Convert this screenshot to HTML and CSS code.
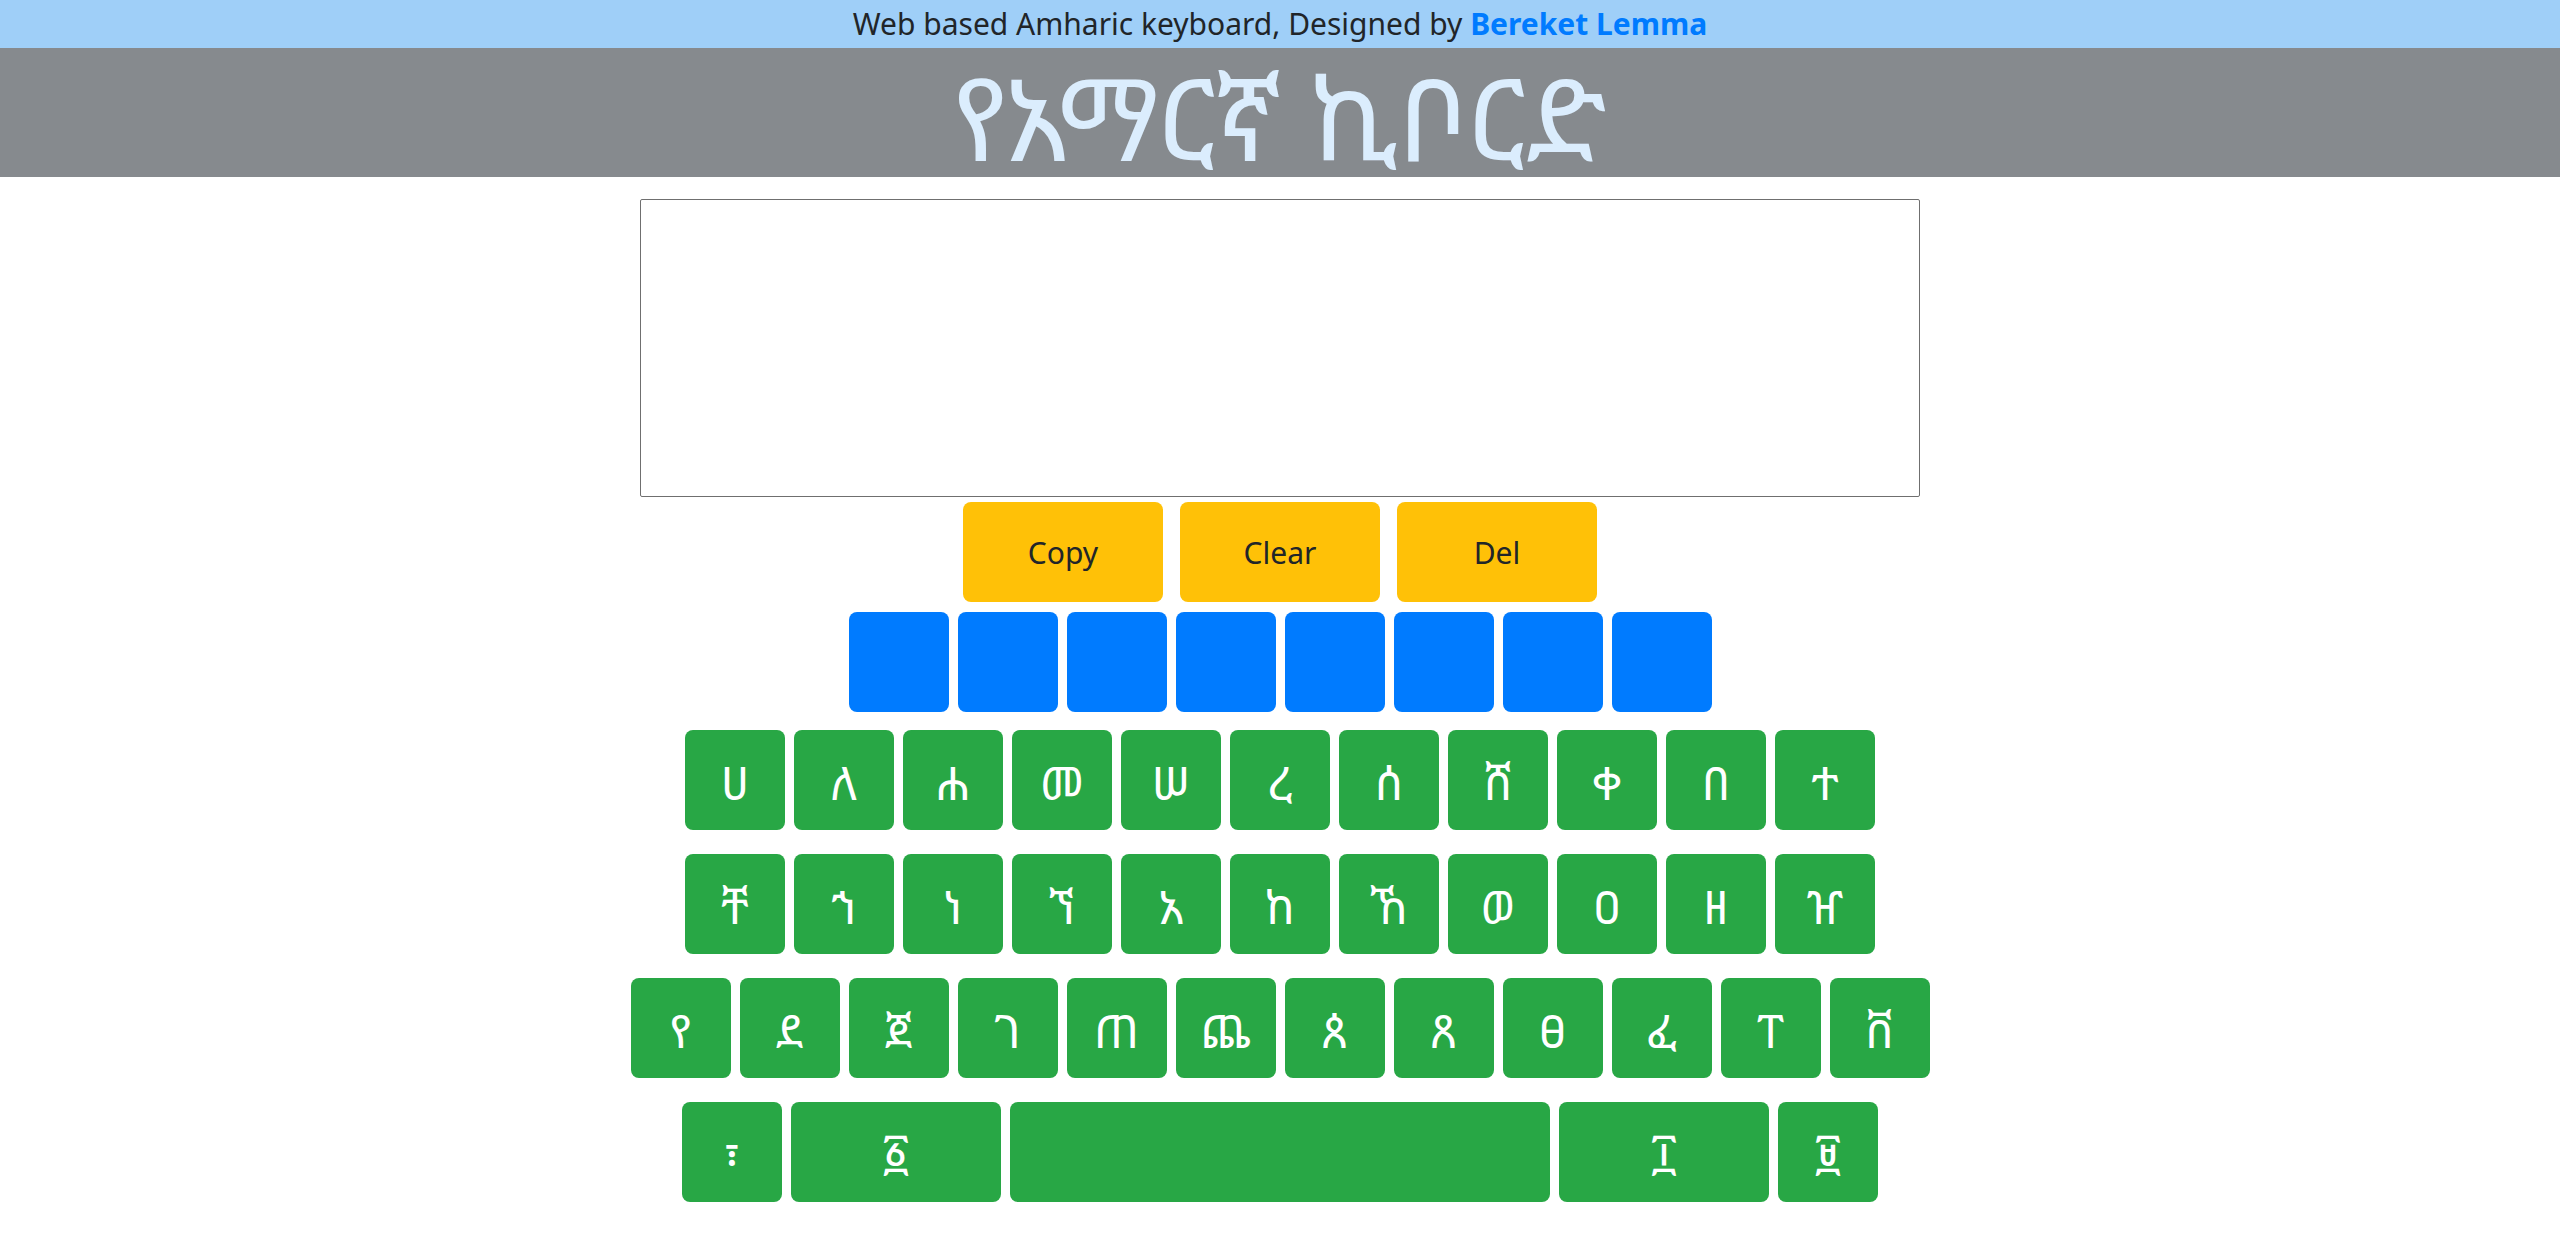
FILE: index.html
```html
<!DOCTYPE html>
<html lang="am">
<head>
<meta charset="utf-8">
<title>የአማርኛ ኪቦርድ</title>
<link rel="stylesheet" href="styles.css">
</head>
<body>
<div class="topbar">Web based Amharic keyboard, Designed by <a class="author" href="#">Bereket Lemma</a></div>
<header class="hero"><h1 class="title">የአማርኛ ኪቦርድ</h1></header>
<main class="main">
  <textarea class="editor"></textarea>
  <div class="row actions">
    <button class="btn btn-warn">Copy</button>
    <button class="btn btn-warn">Clear</button>
    <button class="btn btn-warn">Del</button>
  </div>
  <div class="row vowels">
    <button class="key key-blue"></button>
    <button class="key key-blue"></button>
    <button class="key key-blue"></button>
    <button class="key key-blue"></button>
    <button class="key key-blue"></button>
    <button class="key key-blue"></button>
    <button class="key key-blue"></button>
    <button class="key key-blue"></button>
  </div>
  <div class="row letters first">
    <button class="key">ሀ</button><button class="key">ለ</button><button class="key">ሐ</button><button class="key">መ</button><button class="key">ሠ</button><button class="key">ረ</button><button class="key">ሰ</button><button class="key">ሸ</button><button class="key">ቀ</button><button class="key">በ</button><button class="key">ተ</button>
  </div>
  <div class="row letters">
    <button class="key">ቸ</button><button class="key">ኀ</button><button class="key">ነ</button><button class="key">ኘ</button><button class="key">አ</button><button class="key">ከ</button><button class="key">ኸ</button><button class="key">ወ</button><button class="key">ዐ</button><button class="key">ዘ</button><button class="key">ዠ</button>
  </div>
  <div class="row letters">
    <button class="key">የ</button><button class="key">ደ</button><button class="key">ጀ</button><button class="key">ገ</button><button class="key">ጠ</button><button class="key">ጨ</button><button class="key">ጰ</button><button class="key">ጸ</button><button class="key">ፀ</button><button class="key">ፈ</button><button class="key">ፐ</button><button class="key">ቨ</button>
  </div>
  <div class="row letters">
    <button class="key">፣</button><button class="key key-wide">፩</button><button class="key key-space"></button><button class="key key-wide">፲</button><button class="key">፱</button>
  </div>
</main>
</body>
</html>
```
FILE: styles.css
```css
html, body {
  margin: 0;
  padding: 0;
  background: #ffffff;
}
body {
  font-family: "Noto Sans", "Open Sans", "Liberation Sans", sans-serif;
  color: #212529;
}
.topbar {
  background: #9fcff8;
  height: 48px;
  line-height: 48px;
  font-size: 30px;
  text-align: center;
  color: #212529;
  white-space: nowrap;
}
.author {
  color: #007bff;
  font-weight: 700;
  text-decoration: none;
}
.hero {
  box-sizing: border-box;
  background: #868a8e;
  height: 129px;
  padding-top: 8px;
  text-align: center;
}
.title {
  margin: 0;
  font-family: "Noto Sans Ethiopic", "Abyssinica SIL", "Noto Serif Ethiopic", "FreeSerif", "DejaVu Sans", sans-serif;
  font-weight: 400;
  font-size: 114px;
  line-height: 121px;
  color: #dbedfd;
  white-space: nowrap;
}
.main {
  display: flex;
  flex-direction: column;
  align-items: center;
  padding-top: 22px;
}
.editor {
  display: block;
  box-sizing: border-box;
  width: 1280px;
  height: 298px;
  margin: 0;
  border: 1px solid #6f6f6f;
  border-radius: 2px;
  resize: none;
}
.row {
  display: flex;
  justify-content: center;
  gap: 9px;
  margin-top: 24px;
}
.actions {
  gap: 17px;
  margin-top: 5px;
}
.vowels {
  margin-top: 10px;
}
.letters.first {
  margin-top: 18px;
}
.btn {
  width: 200px;
  height: 100px;
  border: none;
  border-radius: 8px;
  font-family: "Noto Sans", "Open Sans", "Liberation Sans", sans-serif;
  font-size: 30px;
  color: #212529;
  padding: 0;
}
.btn-warn {
  background: #ffc107;
}
.key {
  width: 100px;
  height: 100px;
  border: none;
  border-radius: 8px;
  padding: 4px 0 0;
  background: #28a745;
  color: #ffffff;
  font-family: "Noto Sans Ethiopic", "Abyssinica SIL", "Noto Serif Ethiopic", "FreeSerif", "DejaVu Sans", sans-serif;
  font-size: 46px;
  line-height: 1;
}
.key-blue {
  background: #007bff;
}
.key-wide {
  width: 210px;
}
.key-space {
  width: 540px;
}
```
